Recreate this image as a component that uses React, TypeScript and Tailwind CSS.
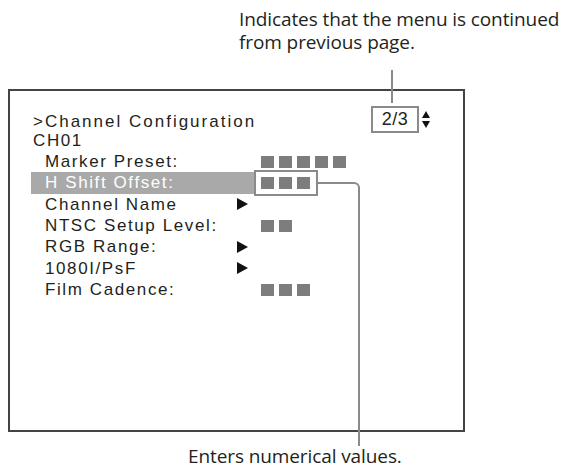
import React from "react";

const MENU_FONT = { fontFamily: '"Liberation Sans", Arial, sans-serif' };
const CAP_FONT = { fontFamily: '"Open Sans", "Noto Sans", sans-serif' };

function Squares({ n }: { n: number }) {
  return (
    <div className="flex gap-[5px]">
      {Array.from({ length: n }).map((_, i) => (
        <div key={i} className="w-[13px] h-[12px] bg-[#7d7d7d]" />
      ))}
    </div>
  );
}

function Tri() {
  return (
    <svg width="11" height="12" viewBox="0 0 11 12" className="block">
      <polygon points="0,0 11,6 0,12" fill="#111" />
    </svg>
  );
}

function Row({ label, value }: { label: string; value: React.ReactNode }) {
  return (
    <div className="grid grid-cols-[204px_auto] items-center h-[21.33px]">
      <div className="pl-[12px] whitespace-nowrap">{label}</div>
      <div>{value}</div>
    </div>
  );
}

export default function App() {
  return (
    <div className="relative w-[564px] h-[471px] bg-white overflow-hidden text-[#231f20]">
      {/* top caption */}
      <div
        className="h-[89px] pl-[239px] pt-[8px] text-[19px] leading-[23px] tracking-[-0.1px]"
        style={CAP_FONT}
      >
        <p className="whitespace-nowrap">Indicates that the menu is continued</p>
        <p className="whitespace-nowrap">from previous page.</p>
      </div>

      {/* menu screen */}
      <div
        className="ml-[8px] w-[457px] h-[343px] border-2 border-[#444] pl-[23px] pt-[17.4px] text-[17px] leading-[21.33px] tracking-[1.6px]"
        style={MENU_FONT}
      >
        <div className="grid grid-cols-[338px_auto] items-center h-[21.33px]">
          <div className="whitespace-nowrap tracking-[2px]">&gt;Channel Configuration</div>
          <div className="flex items-center relative -top-[2px]">
            <div className="w-[48px] h-[27px] border-2 border-[#8a8a8a] flex items-center justify-center tracking-[0.5px] text-[18px]">
              2/3
            </div>
            <svg width="8" height="20" viewBox="0 0 8 20" className="ml-[3px] block">
              <polygon points="4,1 8,8 0,8" fill="#111" />
              <polygon points="0,11 8,11 4,18" fill="#111" />
            </svg>
          </div>
        </div>
        <div className="h-[21.33px] flex items-center">CH01</div>
        <Row label="Marker Preset:" value={<div className="ml-[24px]"><Squares n={5} /></div>} />
        <div className="flex items-center h-[21.33px]">
          <div className="-ml-[2px] w-[223px] h-[22px] bg-[#a9a9a9] text-white pl-[14px] flex items-center whitespace-nowrap">
            H Shift Offset:
          </div>
          <div className="w-[64px] h-[26px] border-2 border-[#8a8a8a] flex items-center pl-[5px]">
            <Squares n={3} />
          </div>
        </div>
        <Row label="Channel Name" value={<Tri />} />
        <Row label="NTSC Setup Level:" value={<div className="ml-[24px]"><Squares n={2} /></div>} />
        <Row label="RGB Range:" value={<Tri />} />
        <Row label="1080I/PsF" value={<Tri />} />
        <Row label="Film Cadence:" value={<div className="ml-[24px]"><Squares n={3} /></div>} />
      </div>

      {/* bottom caption */}
      <div
        className="mt-[13px] pl-[188px] text-[19px] leading-[23px] tracking-[-0.1px] whitespace-nowrap"
        style={CAP_FONT}
      >
        Enters numerical values.
      </div>

      {/* leader lines */}
      <div className="absolute left-[391px] top-[70px] w-[2px] h-[33px] bg-[#8a8a8a]" />
      <div className="absolute left-[318px] top-[182px] w-[42px] h-[264px] border-t-2 border-r-2 border-[#8a8a8a] rounded-tr-[6px]" />
    </div>
  );
}
